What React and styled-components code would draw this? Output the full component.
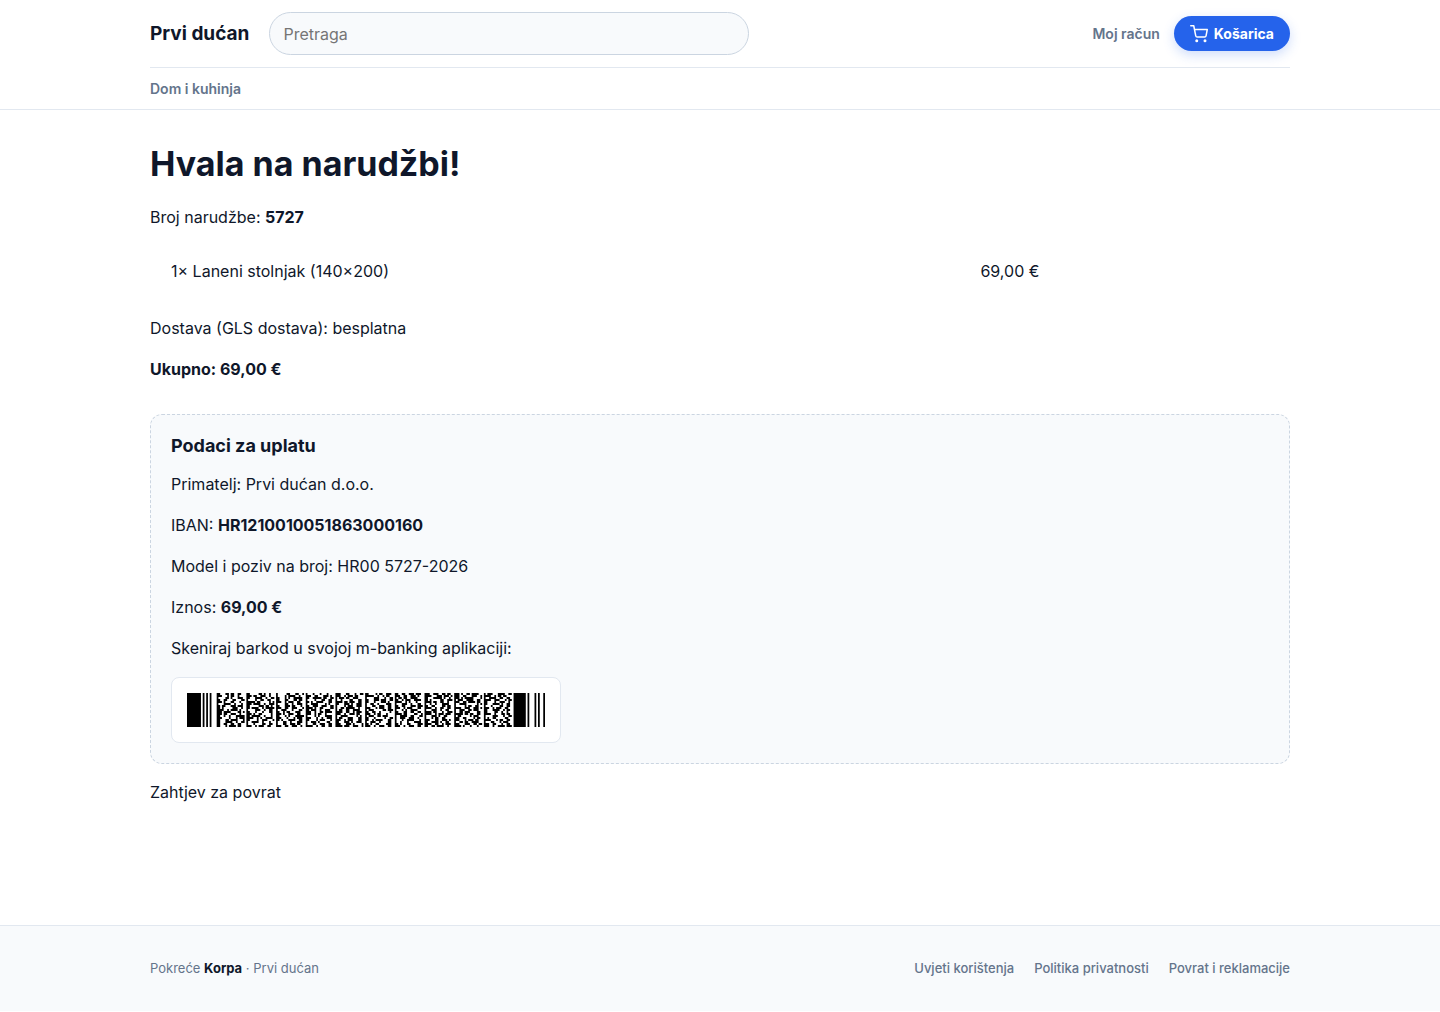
import React, { useState } from 'react';
import styled, { createGlobalStyle } from 'styled-components';

const GlobalStyle = createGlobalStyle`
  *, *::before, *::after {
    box-sizing: border-box;
  }

  body {
    margin: 0;
    background-color: #ffffff;
    color: #0f172a;
    font-family: Inter, 'Open Sans', sans-serif;
    font-size: 16px;
    line-height: 25px;
  }

  a {
    color: inherit;
    text-decoration: none;
  }
`;

const Container = styled.div`
  width: 100%;
  max-width: 1180px;
  margin: 0 auto;
  padding: 0 20px;
`;

const Header = styled.header`
  border-bottom: 1px solid #e2e8f0;
`;

const TopBar = styled.div`
  display: flex;
  align-items: center;
  gap: 20px;
  padding: 12px 0;
  border-bottom: 1px solid #e2e8f0;
`;

const Brand = styled.a`
  font-size: 19px;
  font-weight: 700;
  white-space: nowrap;
`;

const SearchForm = styled.form`
  flex: 0 1 480px;
`;

const SearchInput = styled.input`
  display: block;
  width: 100%;
  height: 43px;
  padding: 0 13px;
  border: 1px solid #cbd5e1;
  border-radius: 22px;
  background-color: #f8fafc;
  color: inherit;
  font-family: inherit;
  font-size: 16px;

  &::placeholder {
    color: #757575;
  }
`;

const Actions = styled.div`
  display: flex;
  align-items: center;
  gap: 14px;
  margin-left: auto;
`;

const NavLink = styled.a`
  color: #64748b;
  font-size: 14px;
  font-weight: 600;
  white-space: nowrap;
`;

const CartLink = styled.a`
  display: flex;
  align-items: center;
  gap: 6px;
  height: 35px;
  padding: 0 16px;
  border-radius: 18px;
  background-color: #2563eb;
  box-shadow: 0 4px 12px rgba(37, 99, 235, 0.22);
  color: #ffffff;
  font-size: 14px;
  font-weight: 700;
`;

const Categories = styled.nav`
  display: flex;
  gap: 20px;
  padding: 8px 0;
`;

const Main = styled.main`
  padding: 32px 0 120px;
`;

const Title = styled.h1`
  margin: 0 0 19px;
  font-size: 34px;
  font-weight: 700;
  line-height: 44px;
`;

const Text = styled.p`
  margin: 0 0 16px;
`;

const Items = styled.table`
  width: 100%;
  margin: 29px 0 32px;
  border-collapse: collapse;
  table-layout: fixed;
`;

const Cell = styled.td`
  width: ${props => props.$width};
  padding: 0 0 0 21px;
`;

const PaymentCard = styled.section`
  margin: 32px 0 16px;
  padding: 20px;
  border: 1px dashed #cbd5e1;
  border-radius: 12px;
  background-color: #f8fafc;
`;

const CardTitle = styled.h2`
  margin: 0 0 15px;
  font-size: 18px;
  font-weight: 700;
  line-height: 22px;
`;

const BarcodeFrame = styled.div`
  max-width: 390px;
  padding: 15px;
  border: 1px solid #e2e8f0;
  border-radius: 8px;
  background-color: #ffffff;

  svg {
    display: block;
    width: 100%;
    height: 34px;
  }
`;

const Footer = styled.footer`
  padding: 32px 0;
  border-top: 1px solid #e2e8f0;
  background-color: #f8fafc;
  color: #64748b;
  font-size: 13px;
  line-height: 21px;
`;

const FooterRow = styled.div`
  display: flex;
  flex-wrap: wrap;
  justify-content: space-between;
  gap: 12px;

  strong {
    color: #0f172a;
  }
`;

const FooterLinks = styled.nav`
  display: flex;
  flex-wrap: wrap;
  gap: 20px;
  font-weight: 500;
`;

// PDF417 layout: alternating bar/space widths, 17 modules per codeword
const START = [8, 1, 1, 1, 1, 1, 1, 3];
const STOP = [7, 1, 1, 3, 1, 1, 1, 2, 1];
const ROWS = 17;
const COLUMNS = 10;

const buildBarcode = () => {
  let seed = 5727;
  const random = max => {
    seed = (seed * 1103515245 + 12345) % 2147483648;
    return Math.floor((seed / 2147483648) * max);
  };

  const codeword = cluster => {
    for (;;) {
      const w = [1, 1, 1, 1, 1, 1, 1, 1];
      for (let i = 0; i < 9; i++) w[random(8)] += 1;
      const key = (w[0] - w[2] + w[4] - w[6] + 9) % 9;
      if (Math.max(...w) <= 6 && key === cluster) return w;
    }
  };

  let path = '';
  const draw = (widths, x, y, height) => {
    widths.forEach((w, i) => {
      if (i % 2 === 0) path += `M${x} ${y}h${w}v${height}h-${w}z`;
      x += w;
    });
  };

  draw(START, 0, 0, ROWS);
  for (let row = 0; row < ROWS; row++) {
    for (let col = 0; col < COLUMNS; col++) {
      draw(codeword((row % 3) * 3), 17 * (col + 1), row, 1);
    }
  }
  draw(STOP, 17 * (COLUMNS + 1), 0, ROWS);
  return path;
};

const BARCODE = buildBarcode();

const Barcode = () => (
  <svg viewBox={`0 0 205 ${ROWS}`} preserveAspectRatio="none" role="img" aria-label="Barkod za uplatu">
    <path d={BARCODE} fill="#000000" />
  </svg>
);

const CartIcon = () => (
  <svg
    width="18"
    height="18"
    viewBox="0 0 24 24"
    fill="none"
    stroke="currentColor"
    strokeWidth="2"
    strokeLinecap="round"
    strokeLinejoin="round"
    aria-hidden="true"
  >
    <circle cx="9" cy="21" r="1" />
    <circle cx="20" cy="21" r="1" />
    <path d="M1 1h4l2.68 13.39a2 2 0 0 0 2 1.61h9.72a2 2 0 0 0 2-1.61L23 6H6" />
  </svg>
);

const items = [{ quantity: 1, name: 'Laneni stolnjak (140×200)', price: '69,00 €' }];

const App = () => {
  const [query, setQuery] = useState('');

  return (
    <>
      <GlobalStyle />
      <Header>
        <Container>
          <TopBar>
            <Brand href="#">Prvi dućan</Brand>
            <SearchForm role="search" onSubmit={e => e.preventDefault()}>
              <SearchInput
                type="search"
                placeholder="Pretraga"
                aria-label="Pretraga"
                value={query}
                onChange={e => setQuery(e.target.value)}
              />
            </SearchForm>
            <Actions>
              <NavLink href="#racun">Moj račun</NavLink>
              <CartLink href="#kosarica">
                <CartIcon />
                Košarica
              </CartLink>
            </Actions>
          </TopBar>
          <Categories>
            <NavLink href="#dom-i-kuhinja">Dom i kuhinja</NavLink>
          </Categories>
        </Container>
      </Header>

      <Container>
        <Main>
          <Title>Hvala na narudžbi!</Title>
          <Text>
            Broj narudžbe: <strong>5727</strong>
          </Text>
          <Items>
            <tbody>
              {items.map(item => (
                <tr key={item.name}>
                  <Cell $width="71%">
                    {item.quantity}× {item.name}
                  </Cell>
                  <Cell>{item.price}</Cell>
                </tr>
              ))}
            </tbody>
          </Items>
          <Text>Dostava (GLS dostava): besplatna</Text>
          <Text>
            <strong>Ukupno: 69,00 €</strong>
          </Text>

          <PaymentCard>
            <CardTitle>Podaci za uplatu</CardTitle>
            <Text>Primatelj: Prvi dućan d.o.o.</Text>
            <Text>
              IBAN: <strong>HR1210010051863000160</strong>
            </Text>
            <Text>Model i poziv na broj: HR00 5727-2026</Text>
            <Text>
              Iznos: <strong>69,00 €</strong>
            </Text>
            <Text>Skeniraj barkod u svojoj m-banking aplikaciji:</Text>
            <BarcodeFrame>
              <Barcode />
            </BarcodeFrame>
          </PaymentCard>

          <a href="#povrat">Zahtjev za povrat</a>
        </Main>
      </Container>

      <Footer>
        <Container>
          <FooterRow>
            <span>
              Pokreće <strong>Korpa</strong> · Prvi dućan
            </span>
            <FooterLinks>
              <a href="#uvjeti">Uvjeti korištenja</a>
              <a href="#privatnost">Politika privatnosti</a>
              <a href="#reklamacije">Povrat i reklamacije</a>
            </FooterLinks>
          </FooterRow>
        </Container>
      </Footer>
    </>
  );
};

export default App;
